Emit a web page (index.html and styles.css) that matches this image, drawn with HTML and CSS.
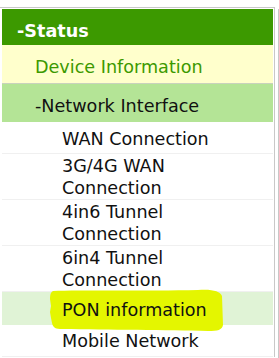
FILE: index.html
```html
<!DOCTYPE html>
<html>
<head>
<meta charset="utf-8">
<link rel="stylesheet" href="styles.css">
</head>
<body>
<div class="page">
  <div class="panel">
    <div class="item status">-Status</div>
    <div class="item device">Device Information</div>
    <div class="item netif">-Network Interface</div>
    <div class="item sub">WAN Connection</div>
    <div class="item sub multi">3G/4G WAN Connection</div>
    <div class="item sub multi">4in6 Tunnel Connection</div>
    <div class="item sub multi">6in4 Tunnel Connection</div>
    <div class="item sub pon">
      <svg class="marker" width="178" height="46" viewBox="0 0 178 46">
        <path d="M5,3 C30,2 100,3 150,2 C164,1 172,3 174,8 L175,37 C174,42 170,43 160,43 C120,42 60,42 14,41 C8,41 5,40 4,35 L3,30 L2,24 L3,18 L2,11 C2,6 3,4 5,3 Z" fill="#e4f600"/>
      </svg>
      <span class="label">PON information</span>
    </div>
    <div class="item sub last">Mobile Network</div>
  </div>
  <div class="side"></div>
</div>
</body>
</html>
```

FILE: styles.css
```css
html, body {
  margin: 0;
  padding: 0;
  background: #ffffff;
  overflow: hidden;
}

.page {
  display: flex;
  align-items: flex-start;
  height: 358px;
}

.panel {
  margin: 7px 0 0 -1px;
  width: 271px;
  padding: 1px 1px 0 2px;
  border: 1px solid #c8c8c8;
  border-bottom: 0;
  font-family: "DejaVu Sans", Verdana, sans-serif;
  font-size: 17.6px;
  line-height: 23px;
  flex-shrink: 0;
}

.side {
  margin: 9px 0 0 3px;
  height: 360px;
  border-left: 1px solid #c8c8c8;
  width: 10px;
}

.item {
  box-sizing: border-box;
}

.status {
  height: 36px;
  padding: 11px 0 0 15px;
  background: #3c9900;
  color: #ffffff;
  font-weight: bold;
}

.device {
  height: 39px;
  padding: 11px 0 0 33px;
  background: #ffffcc;
  color: #3c9900;
  border-bottom: 1px solid #c9d2bd;
}

.netif {
  height: 38px;
  padding: 11px 0 0 33px;
  background: #b4e496;
  color: #111111;
}

.sub {
  min-height: 32px;
  padding: 6px 30px 0 60px;
  line-height: 22px;
  background: #ffffff;
  color: #111111;
  border-bottom: 1px solid #f0f0f0;
}

.sub.multi {
  min-height: 0;
  padding-top: 1px;
}

.pon {
  position: relative;
  min-height: 33px;
  padding-top: 7px;
  background: #e0f3d6;
  border-bottom: 0;
}

.sub.last {
  padding-top: 5px;
}

.marker {
  position: absolute;
  left: 46px;
  top: -4px;
}

.label {
  position: relative;
}
```
